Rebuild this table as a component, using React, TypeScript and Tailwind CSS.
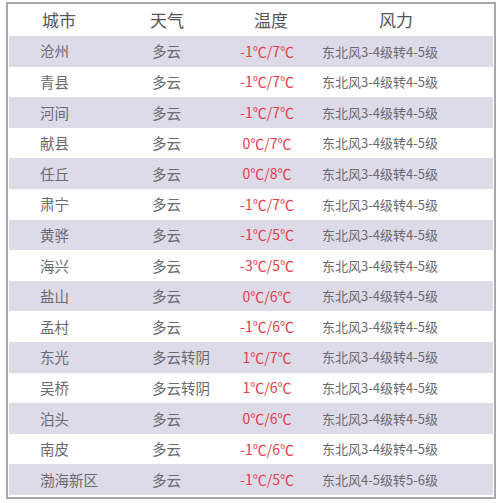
const rows = [
  { city: "沧州", weather: "多云", temp: "-1℃/7℃", wind: "东北风3-4级转4-5级" },
  { city: "青县", weather: "多云", temp: "-1℃/7℃", wind: "东北风3-4级转4-5级" },
  { city: "河间", weather: "多云", temp: "-1℃/7℃", wind: "东北风3-4级转4-5级" },
  { city: "献县", weather: "多云", temp: "0℃/7℃", wind: "东北风3-4级转4-5级" },
  { city: "任丘", weather: "多云", temp: "0℃/8℃", wind: "东北风3-4级转4-5级" },
  { city: "肃宁", weather: "多云", temp: "-1℃/7℃", wind: "东北风3-4级转4-5级" },
  { city: "黄骅", weather: "多云", temp: "-1℃/5℃", wind: "东北风3-4级转4-5级" },
  { city: "海兴", weather: "多云", temp: "-3℃/5℃", wind: "东北风3-4级转4-5级" },
  { city: "盐山", weather: "多云", temp: "0℃/6℃", wind: "东北风3-4级转4-5级" },
  { city: "孟村", weather: "多云", temp: "-1℃/6℃", wind: "东北风3-4级转4-5级" },
  { city: "东光", weather: "多云转阴", temp: "1℃/7℃", wind: "东北风3-4级转4-5级" },
  { city: "吴桥", weather: "多云转阴", temp: "1℃/6℃", wind: "东北风3-4级转4-5级" },
  { city: "泊头", weather: "多云", temp: "0℃/6℃", wind: "东北风3-4级转4-5级" },
  { city: "南皮", weather: "多云", temp: "-1℃/6℃", wind: "东北风3-4级转4-5级" },
  { city: "渤海新区", weather: "多云", temp: "-1℃/5℃", wind: "东北风4-5级转5-6级" },
]

export default function App() {
  return (
    <div
      className="w-[500px] h-[503px] bg-white pt-[2px] pl-[6px]"
      style={{ fontFamily: '"Noto Sans CJK SC", "Noto Sans", sans-serif' }}
    >
      <div className="w-[490px] h-[497px] border-2 border-[#a8a8a8] px-[1px]">
        <div className="flex items-center h-[32px] text-[17px] text-[#555]">
          <div className="w-[112px] pl-[33px]">城市</div>
          <div className="w-[100px] pl-[29px]">天气</div>
          <div className="w-[100px] text-center">温度</div>
          <div className="w-[150px] text-center">风力</div>
        </div>
        {rows.map((r, i) => (
          <div
            key={r.city}
            className={`flex items-center h-[30.6px] text-[14px] text-[#6a6a72] ${
              i % 2 === 0 ? "bg-[#dedbe9]" : "bg-white"
            }`}
          >
            <div className="w-[112px] pl-[31px] text-[14.5px]">{r.city}</div>
            <div className="w-[100px] pl-[31px] text-[14.5px]">{r.weather}</div>
            <div className="w-[92px] text-center text-[#e23b4a]">{r.temp}</div>
            <div className="pl-[9px] text-[13px]">{r.wind}</div>
          </div>
        ))}
      </div>
    </div>
  )
}
